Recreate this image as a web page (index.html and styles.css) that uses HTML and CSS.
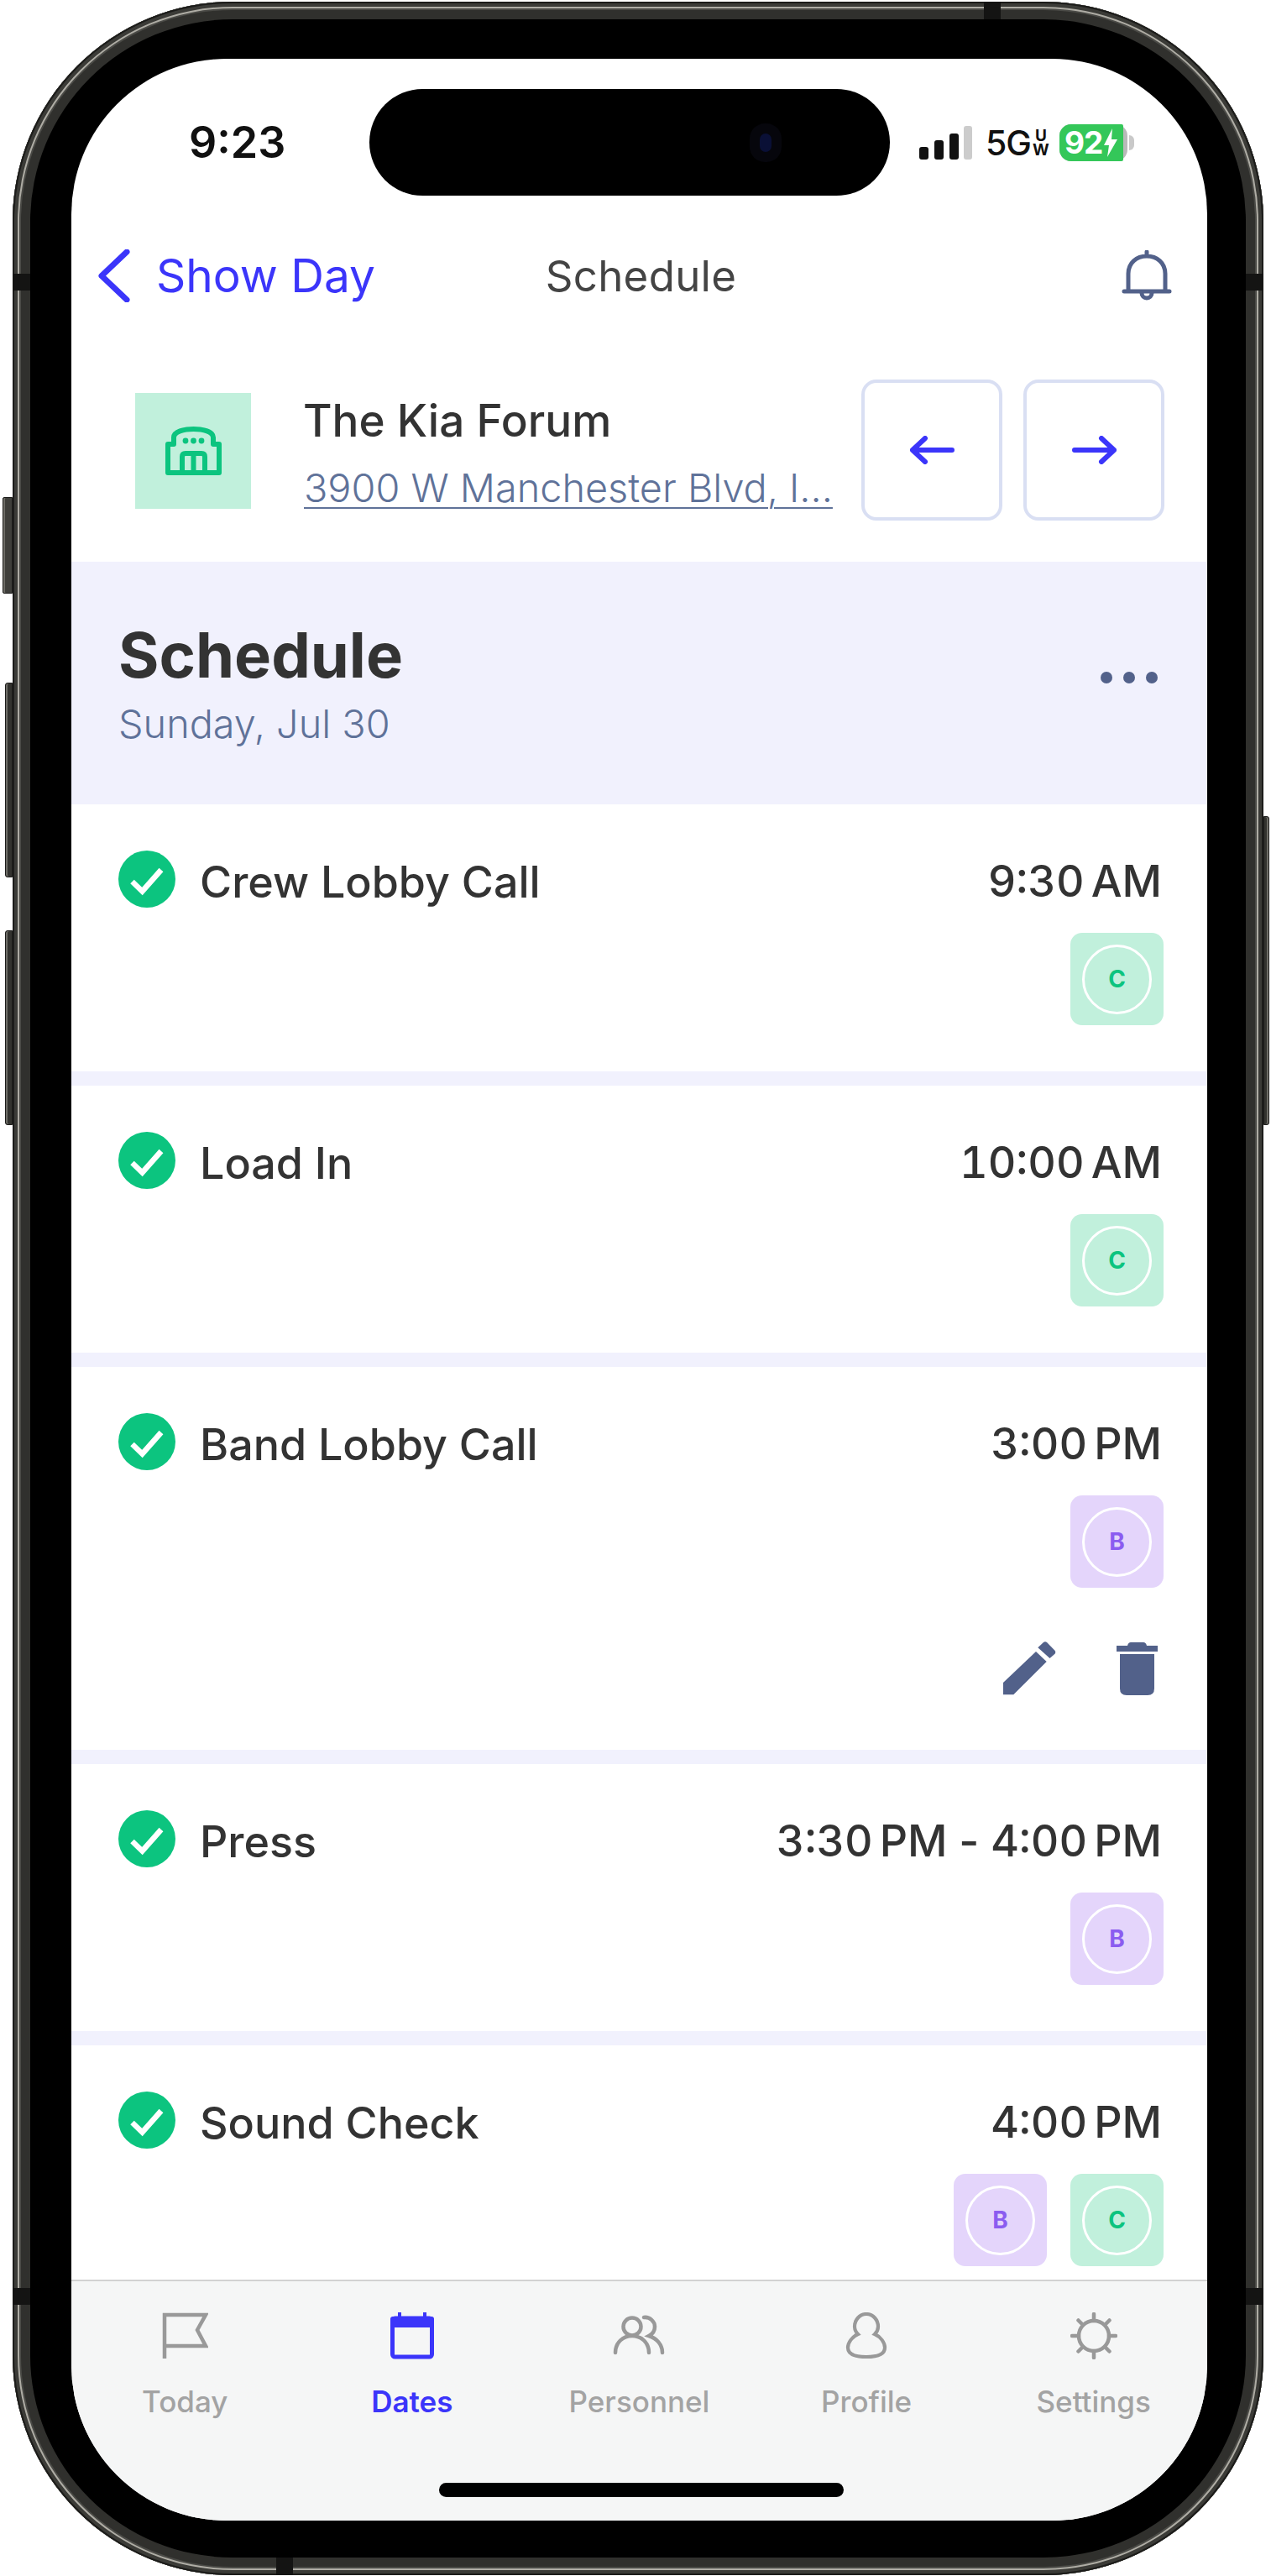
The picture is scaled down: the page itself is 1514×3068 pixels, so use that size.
FILE: index.html
```html
<!DOCTYPE html>
<html lang="en">
<head>
  <meta charset="UTF-8">
  <meta name="viewport" content="width=device-width, initial-scale=1.0">
  <title>Schedule</title>
  <link rel="stylesheet" href="styles.css">
</head>

<body>
  <svg class="icon-defs" aria-hidden="true">
    <symbol id="check" viewBox="0 0 68 68">
      <circle cx="34" cy="34" r="34" fill="#0cc47f"/>
      <path d="M16.500 37l12 11.500L51 23" fill="none" stroke="#fff" stroke-width="6.500"/>
    </symbol>
  </svg>

  <div class="phone">
    <span class="btn btn-silent"></span>
    <span class="btn btn-vol-up"></span>
    <span class="btn btn-vol-down"></span>
    <span class="btn btn-power"></span>
    <span class="band band-l1"></span>
    <span class="band band-l2"></span>
    <span class="band band-r1"></span>
    <span class="band band-r2"></span>
    <span class="band band-t"></span>
    <span class="band band-b"></span>

    <div class="screen">
      <!-- status bar -->
      <div class="status">
        <div class="status-time">9:23</div>
        <div class="island"><span class="camera"></span></div>
        <div class="status-right">
          <svg class="signal" width="63" height="40" viewBox="0 0 63 40">
            <rect x="0" y="25" width="11" height="15" rx="3" fill="#111"/>
            <rect x="18" y="17" width="11" height="23" rx="3" fill="#111"/>
            <rect x="36" y="9" width="11" height="31" rx="3" fill="#111"/>
            <rect x="53" y="0" width="10" height="40" rx="3" fill="#ccc"/>
          </svg>
          <span class="net">5G</span>
          <span class="net-sub"><span>U</span><span>W</span></span>
          <div class="battery">
            <div class="battery-fill">
              <span>92</span>
              <svg width="16" height="34" viewBox="0 0 16 34"><path d="M10 0L0 20h6L4 34 16 13H9z" fill="#fff"/></svg>
            </div>
          </div>
        </div>
      </div>

      <!-- nav -->
      <div class="nav">
        <a class="nav-back">
          <svg width="38" height="63" viewBox="0 0 38 63"><path d="M34 3L4 31.500 34 60" fill="none" stroke="#3b35fa" stroke-width="7" stroke-linecap="round" stroke-linejoin="round"/></svg>
          <span>Show Day</span>
        </a>
        <div class="nav-title">Schedule</div>
        <div class="nav-bell">
          <svg width="60" height="60" viewBox="0 0 60 60" fill="none" stroke="#52618a" stroke-width="5" stroke-linecap="round">
            <path d="M30 2v5M3 49h54M8 49V28C8 15 18 7 30 7s22 8 22 21v21"/>
            <path d="M24 51a6 6 0 0 0 12 0"/>
          </svg>
        </div>
      </div>

      <!-- venue -->
      <div class="venue">
        <div class="venue-icon">
          <svg width="67" height="58" viewBox="0 0 67 58" fill="none" stroke="#0cc47f" stroke-width="6" stroke-linejoin="round">
            <path d="M3 55V21h7v-8C10 6 22 3 33.500 3S57 6 57 13v8h7v34z"/>
            <path d="M20 55V36q0-4 4-4h19q4 0 4 4v19M33.500 32v23"/>
            <g fill="#0cc47f" stroke="none">
              <circle cx="24" cy="17" r="3.400"/><circle cx="33.500" cy="17" r="3.400"/><circle cx="43" cy="17" r="3.400"/>
            </g>
          </svg>
        </div>
        <div class="venue-text">
          <div class="venue-name">The Kia Forum</div>
          <a class="venue-addr">3900 W Manchester Blvd, I...</a>
        </div>
        <div class="venue-btn">
          <svg width="53" height="34" viewBox="0 0 53 34" fill="none" stroke="#3b35fa" stroke-width="6" stroke-linecap="round" stroke-linejoin="round"><path d="M50 17H3M18 3L3 17l15 14"/></svg>
        </div>
        <div class="venue-btn">
          <svg width="53" height="34" viewBox="0 0 53 34" fill="none" stroke="#3b35fa" stroke-width="6" stroke-linecap="round" stroke-linejoin="round"><path d="M3 17h47M35 3l15 14-15 14"/></svg>
        </div>
      </div>

      <!-- section header -->
      <div class="section">
        <div>
          <div class="section-title">Schedule</div>
          <div class="section-date">Sunday, Jul 30</div>
        </div>
        <div class="dots"><span></span><span></span><span></span></div>
      </div>

      <!-- schedule list -->
      <div class="list">
        <div class="row">
          <div class="row-head">
            <svg class="check"><use href="#check"/></svg>
            <div class="row-title">Crew Lobby Call</div>
            <div class="row-time">9:30 AM</div>
          </div>
          <div class="badges">
            <div class="badge badge-c"><span>C</span></div>
          </div>
        </div>

        <div class="row">
          <div class="row-head">
            <svg class="check"><use href="#check"/></svg>
            <div class="row-title">Load In</div>
            <div class="row-time">10:00 AM</div>
          </div>
          <div class="badges">
            <div class="badge badge-c"><span>C</span></div>
          </div>
        </div>

        <div class="row">
          <div class="row-head">
            <svg class="check"><use href="#check"/></svg>
            <div class="row-title">Band Lobby Call</div>
            <div class="row-time">3:00 PM</div>
          </div>
          <div class="badges">
            <div class="badge badge-b"><span>B</span></div>
          </div>
          <div class="row-actions">
            <svg width="63" height="64" viewBox="0 0 63 64" fill="#52618a">
              <path d="M39 12l12.700 12-39.400 39.300H0V49z"/>
              <path d="M48 1q2-1.500 4 0l9.500 9.700q1.500 2 0 4l-6 5.300-14.200-12.700z"/>
            </svg>
            <svg width="49" height="63" viewBox="0 0 49 63" fill="#52618a">
              <path d="M13 4q1-4 4-4h15q3 0 4 4h13v7H0V4z"/>
              <path d="M4 14h41v41q0 8-8 8H12q-8 0-8-8z"/>
            </svg>
          </div>
        </div>

        <div class="row">
          <div class="row-head">
            <svg class="check"><use href="#check"/></svg>
            <div class="row-title">Press</div>
            <div class="row-time">3:30 PM<span class="time-sep"> - </span>4:00 PM</div>
          </div>
          <div class="badges">
            <div class="badge badge-b"><span>B</span></div>
          </div>
        </div>

        <div class="row">
          <div class="row-head">
            <svg class="check"><use href="#check"/></svg>
            <div class="row-title">Sound Check</div>
            <div class="row-time">4:00 PM</div>
          </div>
          <div class="badges">
            <div class="badge badge-b"><span>B</span></div>
            <div class="badge badge-c"><span>C</span></div>
          </div>
        </div>
      </div>

      <!-- tab bar -->
      <div class="tabs">
        <div class="tab">
          <svg width="56" height="56" viewBox="0 0 56 56" fill="none" stroke="#999" stroke-width="4.500">
            <path d="M4 55V3h49l-10 18 10 19H4"/>
          </svg>
          <span>Today</span>
        </div>
        <div class="tab tab-active">
          <svg width="56" height="56" viewBox="0 0 56 56">
            <rect x="4.500" y="7" width="47" height="46" rx="3" fill="none" stroke="#3b35fa" stroke-width="5"/>
            <rect x="2" y="5" width="52" height="13" rx="3" fill="#3b35fa"/>
            <rect x="11" y="0" width="4" height="8" fill="#3b35fa"/>
            <rect x="41" y="0" width="4" height="8" fill="#3b35fa"/>
          </svg>
          <span>Dates</span>
        </div>
        <div class="tab">
          <svg width="62" height="56" viewBox="0 0 62 56" fill="none" stroke="#999" stroke-width="4.500" stroke-linecap="round">
            <circle cx="23" cy="17" r="10.500"/>
            <path d="M3 48C3 36 12 28 23 28s20 8 20 20"/>
            <path d="M37 6c7-1 13 5 13 11 0 5-3 9-7 11 9 3 16 10 16 20"/>
          </svg>
          <span>Personnel</span>
        </div>
        <div class="tab">
          <svg width="56" height="56" viewBox="0 0 56 56" fill="none" stroke="#999" stroke-width="4.200">
            <path d="M28 2c-8 0-14 7-14 15 0 4 2 7 4 9C11 29 6 36 6 42c0 8 9 11 22 11s22-3 22-11c0-6-5-13-12-16 2-2 4-5 4-9 0-8-6-15-14-15z"/>
          </svg>
          <span>Profile</span>
        </div>
        <div class="tab">
          <svg width="56" height="56" viewBox="0 0 56 56" fill="none" stroke="#999" stroke-width="4.500" stroke-linecap="round">
            <circle cx="28" cy="28" r="18"/>
            <path d="M28 10V2M28 46v8M10 28H2M46 28h8M15 15L9.500 9.500M41 15l5.500-5.500M15 41l-5.500 5.500M41 41l5.500 5.500"/>
          </svg>
          <span>Settings</span>
        </div>
      </div>
      <div class="home-bar"></div>
    </div>
  </div>
</body>

</html>
```

FILE: styles.css
```css
body {
  margin: 0;
  background-color: #fff;
  font-family: 'Inter', sans-serif;
  color: #333;
  overflow: hidden;
}

.icon-defs {
  position: absolute;
  width: 0;
  height: 0;
}

svg {
  display: block;
  flex-shrink: 0;
}

/* phone frame */
.phone {
  position: relative;
  box-sizing: border-box;
  width: 1490px;
  height: 3065px;
  margin: 2px 0 0 15px;
  padding: 68px 67px 65px 70px;
  background-color: #000;
  border-radius: 262px;
  box-shadow:
    inset 0 0 0 2px #1c1c1a,
    inset 0 0 0 6px #3b3b37,
    inset 0 0 0 8px #aeaca4,
    inset 0 0 0 10px #4a4a46,
    inset 0 0 0 21px #30302d;
}

.btn {
  position: absolute;
  background-color: #33332f;
  border: 1px solid #1c1c1a;
  box-sizing: border-box;
  box-shadow: inset 2px 0 0 #6e6d67;
}

.btn-silent {
  left: -12px;
  top: 590px;
  width: 12px;
  height: 115px;
  border-radius: 2px 0 0 2px;
  background-color: #3f3f3b;
}

.btn-vol-up {
  left: -9px;
  top: 811px;
  width: 9px;
  height: 232px;
  border-radius: 3px 0 0 3px;
}

.btn-vol-down {
  left: -9px;
  top: 1106px;
  width: 9px;
  height: 232px;
  border-radius: 3px 0 0 3px;
}

.btn-power {
  right: -7px;
  top: 970px;
  width: 7px;
  height: 368px;
  border-radius: 0 3px 3px 0;
  box-shadow: inset -2px 0 0 #6e6d67;
}

.band {
  position: absolute;
  background-color: #141413;
}

.band-l1, .band-l2 { left: 0; width: 21px; height: 20px; }
.band-r1, .band-r2 { right: 0; width: 21px; height: 20px; }
.band-l1, .band-r1 { top: 324px; }
.band-l2, .band-r2 { top: 2723px; }
.band-t { top: 0; left: 1157px; width: 20px; height: 21px; }
.band-b { bottom: 0; left: 314px; width: 20px; height: 21px; }

.screen {
  position: relative;
  display: flex;
  flex-direction: column;
  height: 100%;
  background-color: #fff;
  border-radius: 185px;
  overflow: hidden;
}

/* status bar */
.status {
  display: flex;
  align-items: center;
  flex-shrink: 0;
  height: 127px;
  padding-top: 36px;
}

.status-time {
  width: 355px;
  padding-left: 140px;
  box-sizing: border-box;
  font-size: 52px;
  font-weight: 600;
  color: #111;
}

.island {
  display: flex;
  align-items: center;
  justify-content: flex-end;
  box-sizing: border-box;
  width: 620px;
  height: 127px;
  padding-right: 141px;
  background-color: #000;
  border-radius: 64px;
}

.camera {
  width: 14px;
  height: 22px;
  background-color: #0a1036;
  border-radius: 7px;
  box-shadow: 0 0 0 12px #06060c;
}

.status-right {
  display: flex;
  align-items: center;
  margin-left: 35px;
}

.net {
  margin-left: 16px;
  font-size: 41px;
  font-weight: 500;
  letter-spacing: -1px;
  color: #111;
}

.net-sub {
  display: flex;
  flex-direction: column;
  align-items: center;
  margin-left: 2px;
  font-size: 19px;
  line-height: 17px;
  font-weight: 700;
  color: #111;
}

.battery {
  position: relative;
  width: 81px;
  height: 44px;
  margin-left: 12px;
  background-color: #b9b9b9;
  border-radius: 14px;
}

.battery::after {
  content: "";
  position: absolute;
  right: -8px;
  top: 13px;
  width: 6px;
  height: 18px;
  background-color: #c9c9c9;
  border-radius: 0 9px 9px 0;
}

.battery-fill {
  display: flex;
  align-items: center;
  justify-content: center;
  gap: 2px;
  width: 76px;
  height: 44px;
  background-color: #34c759;
  border-radius: 14px 2px 2px 14px;
  font-size: 37px;
  font-weight: 700;
  letter-spacing: -1px;
  color: #fff;
}

/* nav */
.nav {
  display: grid;
  grid-template-columns: 1fr auto 1fr;
  align-items: center;
  flex-shrink: 0;
  height: 190px;
  padding: 0 42px 0 32px;
}

.nav-back {
  display: flex;
  align-items: center;
  gap: 31px;
  font-size: 55px;
  color: #3b35fa;
}

.nav-title {
  margin-left: 14px;
  font-size: 51px;
  letter-spacing: 0.3px;
  color: #444;
}

.nav-bell {
  justify-self: end;
}

/* venue row */
.venue {
  display: flex;
  align-items: center;
  flex-shrink: 0;
  height: 226px;
  padding: 0 51px 20px 76px;
}

.venue-icon {
  display: flex;
  align-items: center;
  justify-content: center;
  width: 138px;
  height: 138px;
  margin-top: 2px;
  background-color: #c1f0dc;
}

.venue-text {
  flex: 1;
  min-width: 0;
  margin-left: 63px;
  padding-top: 8px;
}

.venue-name {
  font-size: 53px;
  font-weight: 500;
  line-height: 70px;
  margin-left: -1px;
}

.venue-addr {
  display: block;
  margin-top: 12px;
  font-size: 46.800px;
  font-weight: 300;
  line-height: 66px;
  color: #5f7299;
  text-decoration: underline;
  text-decoration-thickness: 2px;
  text-underline-offset: 6px;
  white-space: nowrap;
}

.venue-btn {
  display: flex;
  align-items: center;
  justify-content: center;
  box-sizing: border-box;
  width: 168px;
  height: 168px;
  margin-left: 25px;
  border: 4px solid #d9dff3;
  border-radius: 18px;
}

/* section header */
.section {
  display: flex;
  align-items: center;
  justify-content: space-between;
  flex-shrink: 0;
  height: 289px;
  box-sizing: border-box;
  padding: 0 59px 0 56px;
  background-color: #f1f1fd;
}

.section-title {
  font-size: 74px;
  font-weight: 700;
  line-height: 88px;
}

.section-date {
  margin-top: 8px;
  font-size: 46.800px;
  font-weight: 300;
  line-height: 60px;
  color: #5f7299;
}

.dots {
  display: flex;
  gap: 13px;
  margin-top: -14px;
}

.dots span {
  width: 14px;
  height: 14px;
  background-color: #52618a;
  border-radius: 50%;
}

/* schedule list */
.list {
  flex: 1;
  min-height: 0;
  display: flex;
  flex-direction: column;
  gap: 17px;
  overflow: hidden;
  background-color: #f1f1fd;
}

.row {
  flex-shrink: 0;
  padding: 56px 52px 55px 56px;
  background-color: #fff;
}

.list .row:last-child {
  flex: 1;
}

.row-head {
  display: flex;
  align-items: center;
  height: 70px;
}

.check {
  width: 68px;
  height: 68px;
  margin-top: -4px;
}

.row-title {
  flex: 1;
  margin-left: 29px;
  padding-top: 2px;
  font-size: 52px;
  font-weight: 500;
}

.row-time {
  margin-right: 2px;
  font-size: 52px;
  font-weight: 500;
  font-variant-numeric: tabular-nums;
  word-spacing: -6px;
}

.time-sep {
  word-spacing: -5px;
}

.badges {
  display: flex;
  justify-content: flex-end;
  gap: 28px;
  margin-top: 27px;
}

.badge {
  display: flex;
  align-items: center;
  justify-content: center;
  width: 111px;
  height: 110px;
  border-radius: 14px;
}

.badge span {
  display: flex;
  align-items: center;
  justify-content: center;
  box-sizing: border-box;
  width: 83px;
  height: 83px;
  border: 3px solid #fff;
  border-radius: 50%;
  font-size: 28px;
  font-weight: 700;
}

.badge-c {
  background-color: #c1f0dc;
  color: #0cc47f;
}

.badge-b {
  background-color: #e4d5fb;
  color: #8b5cf0;
}

.row-actions {
  display: flex;
  justify-content: flex-end;
  align-items: center;
  gap: 72px;
  margin-top: 64px;
  margin-bottom: 10px;
  padding-right: 7px;
}

/* tab bar */
.tabs {
  display: grid;
  grid-template-columns: repeat(5, 1fr);
  flex-shrink: 0;
  box-sizing: border-box;
  height: 287px;
  padding-top: 37px;
  background-color: #f5f6f6;
  border-top: 2px solid #d2d2d2;
}

.tab {
  display: flex;
  flex-direction: column;
  align-items: center;
  font-size: 35px;
  font-weight: 500;
  line-height: 40px;
  color: #a3a3a3;
}

.tab span {
  margin-top: 30px;
}

.tab-active {
  font-weight: 600;
  color: #3b35fa;
}

.home-bar {
  position: absolute;
  left: 438px;
  bottom: 28px;
  width: 482px;
  height: 17px;
  background-color: #000;
  border-radius: 9px;
}
```
